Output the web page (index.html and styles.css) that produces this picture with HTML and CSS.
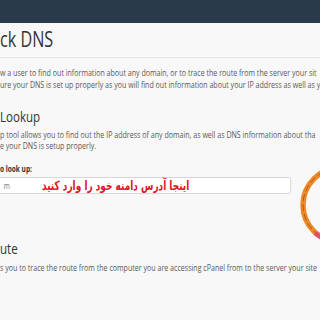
FILE: index.html
```html
<!DOCTYPE html>
<html>
<head>
<meta charset="utf-8">
<link rel="stylesheet" href="styles.css">
</head>
<body>
<div class="screen">
  <div class="topbar"></div>
  <div class="page">
    <h1 class="title">ck DNS</h1>
    <p class="desc">w a user to find out information about any domain, or to trace the route from the server your sit<br>ure your DNS is set up properly as you will find out information about your IP address as well as y</p>
    <h2 class="section">Lookup</h2>
    <p class="desc tight">p tool allows you to find out the IP address of any domain, as well as DNS information about tha<br>e your DNS is setup properly.</p>
    <label class="label">o look up:</label>
    <div class="field"><span class="field-text">m</span></div>
    <h2 class="section route">ute</h2>
    <p class="desc last">s you to trace the route from the computer you are accessing cPanel from to the server your site</p>
  </div>
  <div class="note" dir="rtl">اینجا آدرس دامنه خود را وارد کنید</div>
  <svg class="ring" width="90" height="90" viewBox="0 0 90 90">
    <circle cx="45" cy="45" r="37" fill="none" stroke="#ec8a2a" stroke-width="5.5"/>
    <circle cx="45" cy="45" r="37" fill="none" stroke="#b4580f" stroke-width="1" stroke-dasharray="7 3"/>
    <path d="M20 73 A37 37 0 0 0 33 80" fill="none" stroke="#e0506a" stroke-width="4.5"/>
  </svg>
</div>
</body>
</html>
```
FILE: styles.css
```css
html, body {
  margin: 0;
  padding: 0;
  background: #f8f8f8;
}
.screen {
  position: relative;
  width: 320px;
  height: 320px;
  overflow: hidden;
  background: #f8f8f8;
}
.topbar {
  height: 23px;
  background: #293a4a;
}
.page {
  width: 416px;
  transform: scaleX(0.77);
  transform-origin: 0 0;
  font-family: "Open Sans", "DejaVu Sans", sans-serif;
  white-space: nowrap;
}
.title {
  margin: 0;
  padding: 5px 0 6px 0;
  font-size: 21px;
  line-height: 23px;
  font-weight: 400;
  color: #333;
  border-bottom: 1px solid #e6e6e6;
}
.desc {
  margin: 9px 0 0 0;
  font-size: 9.2px;
  line-height: 11.6px;
  color: #585858;
}
.desc.tight {
  margin-top: 3.5px;
}
.desc.last {
  margin-top: 4.5px;
}
.section {
  margin: 17px 0 0 0;
  font-size: 15px;
  line-height: 18px;
  font-weight: 400;
  color: #333;
}
.section.route {
  margin-top: 45.5px;
}
.label {
  display: block;
  margin-top: 11.3px;
  font-size: 8.5px;
  line-height: 11.6px;
  font-weight: 700;
  color: #333;
}
.field {
  margin: 2px 0 0 -20px;
  width: 398px;
  height: 17px;
  box-sizing: border-box;
  border: 1px solid #d2d2d2;
  border-radius: 3px;
  background: #fff;
  display: flex;
  align-items: center;
  padding-left: 24px;
}
.field-text {
  font-size: 8.5px;
  color: #777;
}
.note {
  position: absolute;
  left: 42px;
  top: 177px;
  transform: scaleX(0.69);
  transform-origin: 0 50%;
  font-family: "DejaVu Sans", sans-serif;
  font-weight: 700;
  font-size: 13px;
  line-height: 17px;
  color: #e2151f;
  white-space: nowrap;
}
.ring {
  position: absolute;
  left: 295px;
  top: 160px;
}
```
